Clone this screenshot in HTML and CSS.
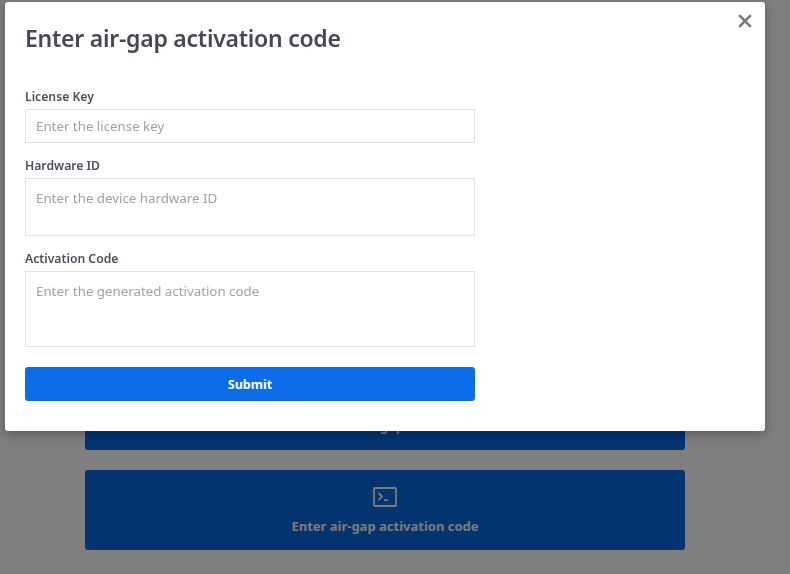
FILE: index.html
```html
<!DOCTYPE html>
<html>
<head>
  <title>Enter air-gap activation code</title>
  <link rel="stylesheet" href="styles.css">
</head>
<body>
  <div class="page">
    <button class="action-card">
      <span class="action-label">Get air-gap code</span>
    </button>
    <button class="action-card">
      <svg class="action-icon" width="24" height="20" viewBox="0 0 24 20" fill="none" stroke="currentColor" stroke-width="1.800">
        <rect x="1" y="1" width="22" height="18" rx="1"/>
        <path d="M5.500 6l3.500 3.500L5.500 13"/>
        <path d="M11 13.200h4"/>
      </svg>
      <span class="action-label">Enter air-gap activation code</span>
    </button>
  </div>

  <div class="backdrop"></div>

  <div class="modal">
    <button class="modal-close" aria-label="Close">
      <svg width="14" height="14" viewBox="0 0 14 14" fill="none" stroke="currentColor" stroke-width="2.600">
        <path d="M1.200 1.200l11.600 11.600M12.800 1.200L1.200 12.800"/>
      </svg>
    </button>
    <h2 class="modal-title">Enter air-gap activation code</h2>
    <form class="form">
      <div class="field">
        <label class="field-label">License Key</label>
        <input class="field-input" type="text" placeholder="Enter the license key">
      </div>
      <div class="field">
        <label class="field-label">Hardware ID</label>
        <textarea class="field-input hardware-input" placeholder="Enter the device hardware ID"></textarea>
      </div>
      <div class="field">
        <label class="field-label">Activation Code</label>
        <textarea class="field-input activation-input" placeholder="Enter the generated activation code"></textarea>
      </div>
      <button class="submit-button" type="button">Submit</button>
    </form>
  </div>
</body>
</html>
```

FILE: styles.css
```css
* {
  margin: 0;
  padding: 0;
  box-sizing: border-box;
}

body {
  font-family: "Noto Sans", "Liberation Sans", sans-serif;
  background-color: #ffffff;
  height: 100vh;
  overflow: hidden;
}

button {
  font-family: inherit;
  border: none;
}

.page {
  height: 100%;
  padding-right: 20px;
  padding-bottom: 24px;
  display: flex;
  flex-direction: column;
  align-items: center;
  justify-content: flex-end;
  gap: 20px;
}

.action-card {
  width: 600px;
  height: 80px;
  padding-bottom: 15px;
  background-color: #0868e0;
  color: #f4f4f4;
  border-radius: 3px;
  display: flex;
  flex-direction: column;
  align-items: center;
  justify-content: flex-end;
}

.action-icon {
  margin-bottom: 10px;
}

.action-label {
  font-size: 13px;
  font-weight: 700;
  line-height: 18px;
}

.backdrop {
  position: fixed;
  top: 0;
  left: 0;
  right: 0;
  bottom: 0;
  background-color: rgba(0, 0, 0, 0.5);
}

.modal {
  position: absolute;
  top: 2px;
  left: 5px;
  width: 760px;
  height: 429px;
  padding: 19px 20px 30px;
  background-color: #ffffff;
  border-radius: 3px;
  box-shadow: 0 3px 12px rgba(0, 0, 0, 0.3);
}

.modal-close {
  position: absolute;
  top: 12px;
  right: 13px;
  width: 14px;
  height: 14px;
  display: flex;
  background: none;
  color: #777777;
}

.modal-title {
  font-size: 23px;
  font-weight: 600;
  line-height: 34px;
  letter-spacing: -0.25px;
  color: #444954;
  margin-bottom: 33px;
}

.form {
  width: 450px;
  display: flex;
  flex-direction: column;
}

.field {
  display: flex;
  flex-direction: column;
  margin-bottom: 14px;
}

.field-label {
  font-size: 12.200px;
  font-weight: 600;
  line-height: 18px;
  color: #4a4f5b;
  margin-bottom: 3px;
}

.field-input {
  display: block;
  width: 100%;
  height: 34px;
  padding: 7px 10px;
  font-family: inherit;
  font-size: 13.300px;
  line-height: 18px;
  border: 1px solid #e2e2e2;
  border-radius: 0;
  outline: none;
  resize: none;
}

.field-input::placeholder {
  color: #9da1a9;
  opacity: 1;
}

.hardware-input {
  height: 58px;
  padding-top: 10px;
}

.activation-input {
  height: 76px;
  padding-top: 10px;
}

.submit-button {
  height: 34px;
  margin-top: 6px;
  background-color: #0b6de8;
  color: #ffffff;
  font-size: 12.500px;
  font-weight: 700;
  border-radius: 3px;
}
```
